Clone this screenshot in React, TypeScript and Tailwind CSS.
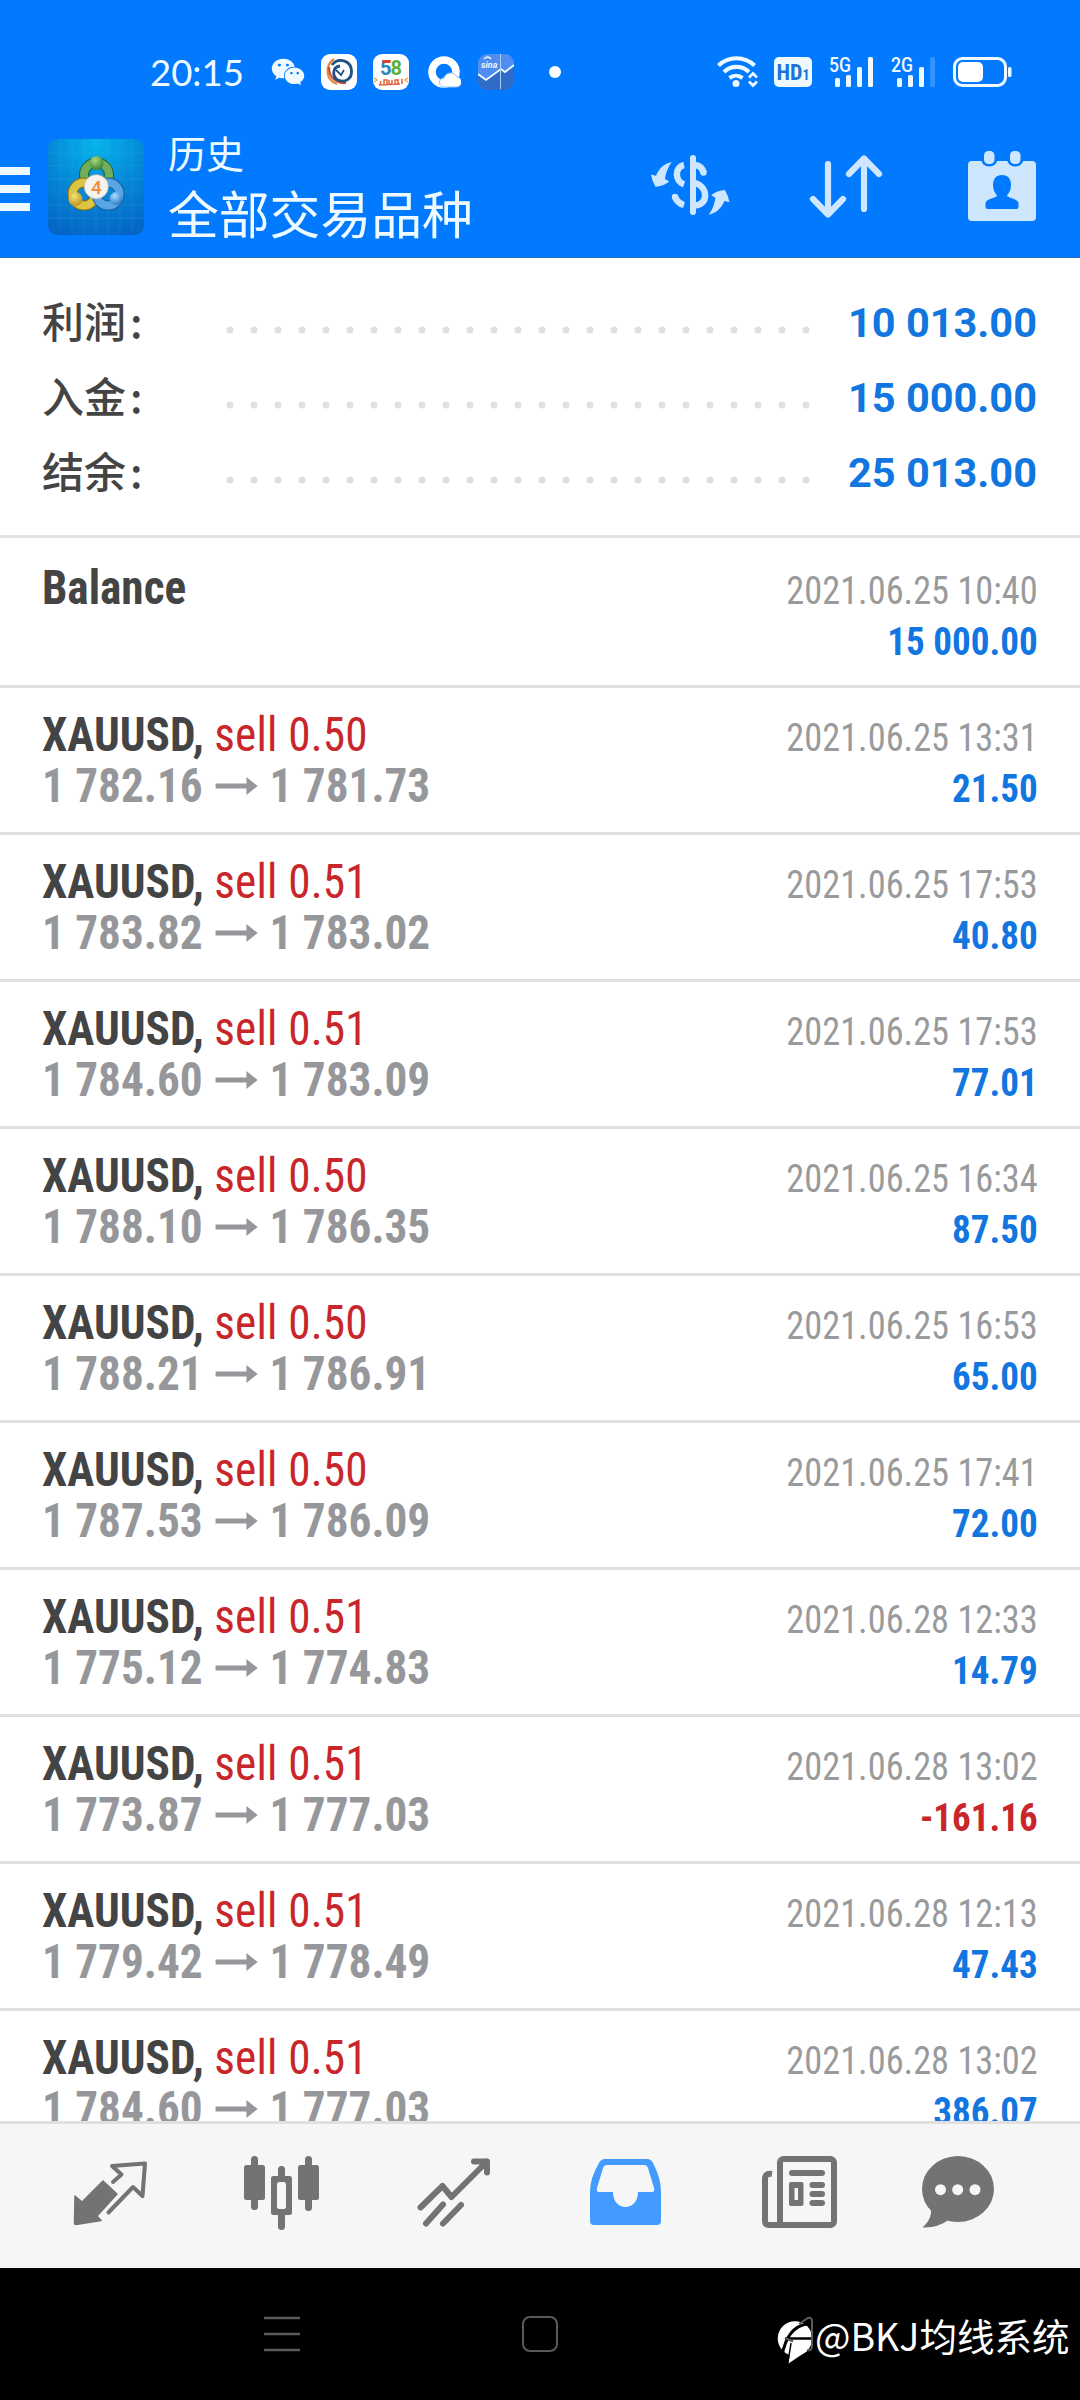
import { FaWeixin } from "react-icons/fa";

type Deal = {
  symbol: string;
  side?: string;
  open?: string;
  close?: string;
  time: string;
  profit: string;
};

const SUMMARY = [
  { label: "利润", value: "10 013.00" },
  { label: "入金", value: "15 000.00" },
  { label: "结余", value: "25 013.00" },
];

const DEALS: Deal[] = [
  { symbol: "Balance", time: "2021.06.25 10:40", profit: "15 000.00" },
  { symbol: "XAUUSD", side: "sell 0.50", open: "1 782.16", close: "1 781.73", time: "2021.06.25 13:31", profit: "21.50" },
  { symbol: "XAUUSD", side: "sell 0.51", open: "1 783.82", close: "1 783.02", time: "2021.06.25 17:53", profit: "40.80" },
  { symbol: "XAUUSD", side: "sell 0.51", open: "1 784.60", close: "1 783.09", time: "2021.06.25 17:53", profit: "77.01" },
  { symbol: "XAUUSD", side: "sell 0.50", open: "1 788.10", close: "1 786.35", time: "2021.06.25 16:34", profit: "87.50" },
  { symbol: "XAUUSD", side: "sell 0.50", open: "1 788.21", close: "1 786.91", time: "2021.06.25 16:53", profit: "65.00" },
  { symbol: "XAUUSD", side: "sell 0.50", open: "1 787.53", close: "1 786.09", time: "2021.06.25 17:41", profit: "72.00" },
  { symbol: "XAUUSD", side: "sell 0.51", open: "1 775.12", close: "1 774.83", time: "2021.06.28 12:33", profit: "14.79" },
  { symbol: "XAUUSD", side: "sell 0.51", open: "1 773.87", close: "1 777.03", time: "2021.06.28 13:02", profit: "-161.16" },
  { symbol: "XAUUSD", side: "sell 0.51", open: "1 779.42", close: "1 778.49", time: "2021.06.28 12:13", profit: "47.43" },
  { symbol: "XAUUSD", side: "sell 0.51", open: "1 784.60", close: "1 777.03", time: "2021.06.28 13:02", profit: "386.07" },
];

export default function App() {
  return (
    <div className="flex flex-col w-[1080px] h-[2400px] overflow-hidden bg-white font-['Roboto','Noto_Sans_CJK_SC',sans-serif]">
      <header className="h-[258px] shrink-0 bg-[#017aff] border-b border-[#1d6fc0] text-[#eefaff]">
        <StatusBar />
        <AppBar />
      </header>

      <section className="h-[280px] shrink-0 border-b-3 border-[#e2e2e2] pt-[27px] pl-[42px] pr-[43px]">
        {SUMMARY.map((s) => (
          <div key={s.label} className="flex items-start h-[75px]">
            <span className="w-[184px] text-[42px] leading-[70px] font-medium text-[#444] font-['Noto_Sans_CJK_SC',sans-serif]">
              {s.label}
              <span className="ml-[4px]">:</span>
            </span>
            <Dots />
            <span className="ml-auto text-[41.5px] leading-[75px] font-bold text-[#1176e0]">{s.value}</span>
          </div>
        ))}
      </section>

      <main className="h-[1583px] shrink-0 overflow-hidden pt-[3px]">
        {DEALS.map((d, i) => (
          <DealRow key={i} deal={d} />
        ))}
      </main>

      <TabBar />
      <NavBar />
    </div>
  );
}

function Dots() {
  return (
    <svg width="584" height="8" viewBox="0 0 584 8" fill="#e0e0e0" className="mt-[41px]">
      {Array.from({ length: 25 }, (_, i) => (
        <circle key={i} cx={4 + i * 24} cy="4" r="3.5" />
      ))}
    </svg>
  );
}

function DealRow({ deal }: { deal: Deal }) {
  const loss = deal.profit.startsWith("-");
  return (
    <div className="flex justify-between h-[147px] px-[42px] border-b-3 border-[#e0e0e0] font-['Roboto_Condensed','Roboto',sans-serif] font-stretch-condensed">
      <div className="pt-[21px] text-[48px] leading-[51px] whitespace-pre font-bold origin-left scale-x-[0.942]">
        <div className="text-[#444]">
          {deal.symbol}
          {deal.side && (
            <>
              , <span className="font-normal text-[#c8262a] tracking-[0.2px]">{deal.side}</span>
            </>
          )}
        </div>
        {deal.open && (
          <div className="flex items-center text-[#96979b]">
            {deal.open}
            <svg width="45" height="20" viewBox="0 0 45 20" fill="currentColor" className="mx-[13px]">
              <path d="M0 7.500h33V1l12 9-12 9v-6.500H0z" />
            </svg>
            {deal.close}
          </div>
        )}
      </div>
      <div className="pt-[25px] text-[39px] leading-[51px] text-right">
        <div className="text-[#999a9c] origin-right scale-x-[0.932]">{deal.time}</div>
        <div
          className={
            loss
              ? "font-bold text-[#c8262a] origin-right scale-x-[0.95]"
              : "font-bold text-[#1176e0] origin-right scale-x-[0.95]"
          }
        >
          {deal.profit}
        </div>
      </div>
    </div>
  );
}

function StatusBar() {
  return (
    <div className="flex items-center h-[125px] pt-[19px] pl-[150px] pr-[68px]">
      <span className="w-[121px] text-[36.5px] leading-[38px] font-['Lato',sans-serif]">20:15</span>
      <FaWeixin className="w-[34px] h-[34px] mr-[16px]" />
      <SwirlIcon />
      <FiftyEightIcon />
      <svg width="34" height="34" viewBox="0 0 34 34" className="mr-[17px]">
        <circle cx="17" cy="17" r="12" fill="none" stroke="#fff" strokeWidth="7.500" />
        <path d="M17 32a4.500 4.500 0 0 1 0-9 7 7 0 0 1 13-1 5 5 0 0 1-1 10z" fill="#fff" stroke="#8fc3ff" strokeWidth="1" />
      </svg>
      <SinaIcon />
      <span className="w-[12px] h-[12px] rounded-full bg-white ml-[35px]" />

      <div className="flex items-center ml-auto">
        <svg width="42" height="32" viewBox="0 0 42 32" fill="none" stroke="currentColor" className="mr-[15px]">
          <path d="M1.500 9.500a26 26 0 0 1 36 0M7 16a18 18 0 0 1 25 0M12.500 22a10.500 10.500 0 0 1 13 0" strokeWidth="4.200" />
          <circle cx="19" cy="27.500" r="3.500" fill="currentColor" stroke="none" />
          <path d="M32 21.500l4-4 4 4M32 25.500l4 4 4-4" strokeWidth="2.800" />
        </svg>
        <div className="flex items-baseline justify-center w-[38px] h-[30px] rounded-[5px] bg-[#eefaff] text-[#1b74d8] font-bold leading-[31px] text-[22px] font-stretch-condensed mr-[17px]">
          HD<span className="text-[14px]">1</span>
        </div>
        <Signal label="5G" weak={false} />
        <Signal label="2G" weak />
        <svg width="59" height="30" viewBox="0 0 59 30">
          <rect x="1.500" y="1.500" width="51" height="27" rx="8" fill="none" stroke="currentColor" strokeWidth="3" />
          <rect x="5" y="5" width="25" height="20" rx="5" fill="#fff" />
          <rect x="55" y="10" width="3.500" height="10" rx="1.500" fill="currentColor" />
        </svg>
      </div>
    </div>
  );
}

function Signal({ label, weak }: { label: string; weak: boolean }) {
  return (
    <svg width="45" height="32" viewBox="0 0 45 32" fill="currentColor" className="mr-[17px] overflow-visible">
      <text x="0" y="15.500" fontSize="20" fontFamily="Roboto" fontWeight="500" textLength="22" lengthAdjust="spacingAndGlyphs">
        {label}
      </text>
      <rect x="6" y="22" width="5" height="9" rx="1.500" />
      <rect x="17" y="19" width="5" height="12" rx="1.500" />
      <rect x="28" y="11" width="5" height="20" rx="1.500" />
      <rect x="39" y="1" width="5" height="30" rx="1.500" opacity={weak ? 0.2 : 1} />
    </svg>
  );
}

function SwirlIcon() {
  return (
    <svg width="36" height="36" viewBox="0 0 36 36" fill="none" className="mr-[16px]">
      <rect width="36" height="36" rx="9" fill="#fff" />
      <path d="M13 5C4 11 4 26 16 30" stroke="#e8863c" strokeWidth="2.200" />
      <path d="M8 13c0 9 5 16 17 16" stroke="#c4502f" strokeWidth="2.200" />
      <path d="M11 11C17 3 30 6 30.500 17 31 25 24 29 17 26c-6-3-6-13 2-14" stroke="#1f4f86" strokeWidth="2.800" />
      <path d="M15 16l5 5 3-5" stroke="#1f4f86" strokeWidth="1.800" />
    </svg>
  );
}

function FiftyEightIcon() {
  return (
    <svg width="36" height="36" viewBox="0 0 36 36" fontFamily="Roboto" fontWeight="700" className="mr-[18px]">
      <rect width="36" height="36" rx="9" fill="#fff" />
      <text x="7" y="21" fontSize="20" fill="#2a86b8">5</text>
      <path d="M9.500 7.500h8" stroke="#e0412f" strokeWidth="3" />
      <text x="17.500" y="21" fontSize="20" fill="#5fae3c">8</text>
      <path d="M7 31l1-4M11 30v-4h3v4M16 26v4h3v-4M22 30v-4h4M25 30v-4M29 30v-5M6 31l21-1" stroke="#e2643a" strokeWidth="1.500" fill="none" />
      <path d="M1 24l3 2-3 2M35 24l-3 2 3 2" stroke="#f0a050" strokeWidth="1.500" fill="none" />
    </svg>
  );
}

function SinaIcon() {
  return (
    <svg width="36" height="36" viewBox="0 0 36 36" fill="none">
      <rect width="36" height="36" rx="9" fill="#4f8df0" />
      <path d="M0 20l8 6 15-11 4 3 9-7v16a9 9 0 0 1-9 9H9a9 9 0 0 1-9-9z" fill="#2f6cc8" />
      <path d="M0 20l8 6 15-11 4 3 9-7" stroke="#f2fbff" strokeWidth="1.800" />
      <path d="M22.500 0v35" stroke="#a9d0f7" strokeWidth="1" />
      <text x="3" y="14" fontSize="9" fontFamily="Roboto" fontStyle="italic" fontWeight="700" fill="#e8f6ff">sina</text>
      <path d="M6 5q4-4 7 0" stroke="#e8f6ff" strokeWidth="1.500" />
    </svg>
  );
}

function AppBar() {
  return (
    <div className="flex h-[132px]">
      <div className="flex flex-col gap-[10px] pt-[42px] w-[30px]">
        <span className="h-[8px] bg-[#eefaff]" />
        <span className="h-[8px] bg-[#eefaff]" />
        <span className="h-[8px] bg-[#eefaff]" />
      </div>
      <AppLogo />
      <div className="ml-[24px] pt-[1px] font-['Noto_Sans_CJK_SC',sans-serif]">
        <div className="text-[38px] leading-[52px]">历史</div>
        <div className="text-[50.8px] leading-[68px]">全部交易品种</div>
      </div>
      <div className="flex items-start ml-auto pr-[40px] pt-[25px] text-[#cfe6ff]">
        <DollarIcon />
        <SortIcon />
        <CalendarIcon />
      </div>
    </div>
  );
}

function AppLogo() {
  return (
    <svg width="96" height="96" viewBox="0 0 96 96" className="ml-[18px] mt-[14px]">
      <defs>
        <radialGradient id="bg" cx="0.5" cy="0.05" r="1">
          <stop offset="0" stopColor="#06b4ec" />
          <stop offset="0.500" stopColor="#0488d6" />
          <stop offset="1" stopColor="#0465c4" />
        </radialGradient>
        <radialGradient id="green" cx="0.4" cy="0.3" r="0.8">
          <stop offset="0" stopColor="#a9d880" />
          <stop offset="1" stopColor="#2c7a2a" />
        </radialGradient>
        <radialGradient id="gold" cx="0.4" cy="0.3" r="0.8">
          <stop offset="0" stopColor="#f4e27a" />
          <stop offset="1" stopColor="#b98a12" />
        </radialGradient>
        <radialGradient id="sky" cx="0.4" cy="0.3" r="0.8">
          <stop offset="0" stopColor="#a8dcff" />
          <stop offset="1" stopColor="#1c6fc0" />
        </radialGradient>
      </defs>
      <rect width="96" height="96" rx="9" fill="url(#bg)" />
      <path d="M12 0v96M24 0v96M36 0v96M48 0v96M60 0v96M72 0v96M84 0v96M0 14h96M0 27h96M0 40h96M0 53h96M0 66h96M0 79h96" stroke="#5cc8f5" strokeWidth="0.700" opacity="0.2" />
      <circle cx="48.500" cy="36" r="12.500" fill="none" stroke="#245f2a" strokeWidth="10" />
      <circle cx="48.500" cy="36" r="12.500" fill="none" stroke="#6fae5c" strokeWidth="8" />
      <circle cx="36" cy="55" r="11.500" fill="none" stroke="#8a6c14" strokeWidth="10" />
      <circle cx="36" cy="55" r="11.500" fill="none" stroke="#dcc544" strokeWidth="8" />
      <circle cx="60" cy="55" r="11.500" fill="none" stroke="#1a5c9c" strokeWidth="10" />
      <circle cx="60" cy="55" r="11.500" fill="none" stroke="#5aa6e4" strokeWidth="8" />
      <circle cx="48.500" cy="24" r="7" fill="url(#green)" />
      <circle cx="27.500" cy="60" r="7" fill="url(#gold)" />
      <circle cx="68" cy="59.500" r="6.500" fill="url(#sky)" />
      <circle cx="48.300" cy="47.700" r="12" fill="#f6f2ee" stroke="#c9c0b4" strokeWidth="0.800" />
      <text x="48.300" y="54.500" textAnchor="middle" fontSize="19" fontFamily="Roboto" fontWeight="500" fill="#f08a3c">4</text>
    </svg>
  );
}

function DollarIcon() {
  return (
    <svg width="80" height="72" viewBox="0 0 80 72" fill="none" stroke="currentColor" strokeWidth="6.500" className="mr-[75px]">
      <path d="M43 8v54" strokeLinecap="round" strokeWidth="6" />
      <path d="M34 15C24.500 17 24.500 31 34 34.500M25 46.500Q27 53 34 55" />
      <path d="M45 15q7 1 8.500 7.500" />
      <circle cx="53.500" cy="22.500" r="3.200" fill="currentColor" stroke="none" />
      <circle cx="25" cy="47" r="3.200" fill="currentColor" stroke="none" />
      <path d="M45 33C59 37 58 55 45 55.500" />
      <g fill="currentColor" stroke="none">
        <path id="swap" d="M21.700 12C13 14 9 19 6 25.700L1 24.500Q2 31 5.500 36.700Q13 36.500 19.300 31.500L15 29Q16 20 21.700 12z" />
        <use href="#swap" transform="rotate(180 40.200 38.350)" />
      </g>
    </svg>
  );
}

function SortIcon() {
  return (
    <svg width="80" height="72" viewBox="0 0 80 72" fill="none" stroke="currentColor" strokeWidth="6.200" strokeLinecap="round" strokeLinejoin="round" className="mr-[80px]">
      <path d="M23 14v50M8 49l15 15.500L38 49M59 59V8.500M44 24L59 8.500 74 24" />
    </svg>
  );
}

function CalendarIcon() {
  return (
    <svg width="75" height="72" viewBox="0 0 75 72" fill="currentColor">
      <rect x="3" y="11" width="68" height="60" rx="4" />
      <rect x="16" y="-4" width="16.500" height="20.500" rx="8" fill="#017aff" />
      <rect x="42" y="-4" width="16.500" height="20.500" rx="8" fill="#017aff" />
      <rect x="19" y="1" width="10.500" height="13" rx="4.500" />
      <rect x="45" y="1" width="10.500" height="13" rx="4.500" />
      <path d="M37 25c6 0 9 4 9 10 0 5-2 8-4 10.500 1 3 11.500 3 11.500 8V57q0 2-2 2H22.500q-2 0-2-2v-3.500c0-5 10.500-5 11.500-8C30 43 28 40 28 35c0-6 3-10 9-10z" fill="#017aff" />
    </svg>
  );
}

function TabBar() {
  return (
    <nav className="flex h-[147px] shrink-0 pl-[24px] pt-[30px] bg-[#f6f6f6] border-t-3 border-[#e0e0e0] text-[#737373]">
      <Tab>
        <path d="M5 42l7 6 21-21 14 13-20 22 4 4.500L6 70.500q-1.500 0-1.500-1.500z" stroke="currentColor" strokeWidth="1.500" strokeLinejoin="round" />
        <path d="M43 28l8.500-7.500L42 12l33-2.500L72.500 42 63 33 38.500 58.500" fill="none" stroke="currentColor" strokeWidth="4" strokeLinejoin="round" strokeLinecap="round" />
      </Tab>
      <Tab>
        <rect x="2" y="11" width="21" height="35" rx="2.500" />
        <rect x="9" y="2" width="7" height="54" rx="3.500" />
        <rect x="56" y="11" width="21" height="35" rx="2.500" />
        <rect x="63" y="2" width="7" height="55" rx="3.500" />
        <rect x="36" y="12" width="7" height="64" rx="3.500" />
        <rect x="29" y="22" width="21" height="39" rx="2.500" />
        <rect x="35" y="28" width="9" height="27" rx="2.500" fill="#f6f6f6" />
      </Tab>
      <Tab>
        <path
          d="M6.500 53.500l22-21.500 9 11L73 7.500M60 7.500h13v11M12 69.500l17-19M29 69.500l18-18.500"
          fill="none"
          stroke="currentColor"
          strokeWidth="6"
          strokeLinecap="round"
          strokeLinejoin="round"
        />
      </Tab>
      <Tab active>
        <path
          fillRule="evenodd"
          d="M19 5h42q4 0 6 4 8 15 8 29v29q0 4-4 4H8q-4 0-4-4V38Q4 24 13 9q2-4 6-4zM21 11q-3 0-4 3l-6 20q-1 4 2 4h14c0 20 25 20 25 0h14q3 0 2-4l-6-20q-1-3-4-3z"
        />
      </Tab>
      <Tab>
        <g fill="none" stroke="currentColor" strokeWidth="6">
          <rect x="22" y="5" width="54" height="66" rx="3.500" />
          <path d="M14 20q-7-1-7 5v42q0 4 4 4h16" />
        </g>
        <rect x="31" y="16" width="36" height="6" rx="3" />
        <path fillRule="evenodd" d="M33 28h10.500q2 0 2 2v20q0 2-2 2H33q-2 0-2-2V30q0-2 2-2zM36.500 34v12h3.500V34z" />
        <rect x="51.500" y="28" width="15.500" height="6" rx="3" />
        <rect x="51.500" y="37" width="15.500" height="6" rx="3" />
        <rect x="51.500" y="46" width="15.500" height="6" rx="3" />
      </Tab>
      <div className="w-[148px] flex justify-center">
        <svg width="80" height="80" viewBox="0 0 80 80" fill="currentColor">
          <ellipse cx="40" cy="35" rx="36" ry="33" />
          <path d="M8 48q6 6 5 11-1 8-8.500 14.500 14 1 27-8z" />
          <circle cx="22.500" cy="35.700" r="5.500" fill="#f6f6f6" />
          <circle cx="39.700" cy="35.700" r="5.500" fill="#f6f6f6" />
          <circle cx="57" cy="35.700" r="5.500" fill="#f6f6f6" />
        </svg>
      </div>
    </nav>
  );
}

function Tab({ active, children }: { active?: boolean; children: React.ReactNode }) {
  return (
    <div className={active ? "w-[172px] flex justify-center text-[#449bff]" : "w-[172px] flex justify-center"}>
      <svg width="80" height="80" viewBox="0 0 80 80" fill="currentColor">
        {children}
      </svg>
    </div>
  );
}

function NavBar() {
  return (
    <footer className="flex h-[132px] shrink-0 bg-black pl-[264px] pt-[48px] text-[#5a5a5a]">
      <svg width="36" height="36" viewBox="0 0 36 36" fill="none" stroke="currentColor" strokeWidth="2.500">
        <path d="M0 2h36M0 18h36M0 34h36" />
      </svg>
      <span className="w-[36px] h-[36px] ml-[222px] rounded-[8px] border-[2.5px] border-current" />
      <div className="flex ml-[219px] text-white">
        <svg width="38" height="50" viewBox="0 0 38 50" fill="none">
          <circle cx="18" cy="22.500" r="17.300" fill="#fff" />
          <path d="M14 30l-2.500 17.500L30 35z" fill="#fff" />
          <path d="M5 40Q10 11 30 8" stroke="#000" strokeWidth="3" />
          <path d="M8 22.500h28" stroke="#000" strokeWidth="2.500" />
          <path d="M14 27q-1 8-3.500 20" stroke="#000" strokeWidth="1.500" />
          <path d="M22 8l9-6q4-1 4 3v25q0 5-5 4M8 22l8 3.500" stroke="#5a5a5a" strokeWidth="2" />
        </svg>
        <span className="mt-[-8px] text-[37.5px] leading-[54px] whitespace-nowrap font-['Noto_Sans_CJK_SC',sans-serif]">
          @BKJ均线系统
        </span>
      </div>
    </footer>
  );
}
